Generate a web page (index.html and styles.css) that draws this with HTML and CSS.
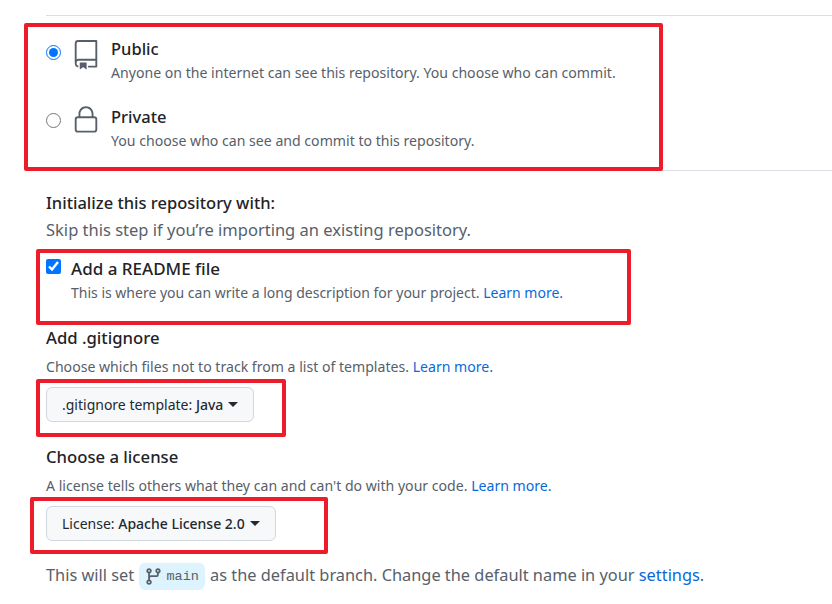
FILE: index.html
```html
<!DOCTYPE html>
<html lang="en">
<head>
    <meta charset="UTF-8">
    <title>Create a new repository</title>
    <link rel="stylesheet" href="styles.css">
</head>
<body>
    <div class="page">
        <hr class="rule">
        <div class="visibility">
            <label class="vis-row">
                <input type="radio" name="visibility" class="vis-radio" checked>
                <svg class="vis-icon" viewBox="0 0 24 24"><path d="M3 2.75A2.75 2.75 0 0 1 5.75 0h14.5a.75.75 0 0 1 .75.75v20.5a.75.75 0 0 1-.75.75h-6a.75.75 0 0 1 0-1.5h5.25v-4H6A1.5 1.5 0 0 0 4.5 18v.75c0 .716.43 1.334 1.05 1.605a.75.75 0 0 1-.6 1.374A3.251 3.251 0 0 1 3 18.75ZM19.5 1.5H5.75c-.69 0-1.25.56-1.25 1.25v12.651A2.989 2.989 0 0 1 6 15h13.5Z"/><path d="M7 18.25a.25.25 0 0 1 .25-.25h5a.25.25 0 0 1 .25.25v5.01a.25.25 0 0 1-.397.201l-2.206-1.604a.25.25 0 0 0-.294 0L7.397 23.46a.25.25 0 0 1-.397-.2Z"/></svg>
                <span class="vis-text">
                    <span class="vis-title">Public</span>
                    <span class="vis-note">Anyone on the internet can see this repository. You choose who can commit.</span>
                </span>
            </label>
            <label class="vis-row">
                <input type="radio" name="visibility" class="vis-radio">
                <svg class="vis-icon" viewBox="0 0 24 24"><path fill-rule="evenodd" d="M6 9V7.25C6 3.845 8.503 1 12 1s6 2.845 6 6.25V9h.5a2.5 2.5 0 0 1 2.5 2.5v8a2.5 2.5 0 0 1-2.5 2.5h-13A2.5 2.5 0 0 1 3 19.5v-8A2.5 2.5 0 0 1 5.5 9ZM5.5 10.5a1 1 0 0 0-1 1v8a1 1 0 0 0 1 1h13a1 1 0 0 0 1-1v-8a1 1 0 0 0-1-1ZM7.5 7.25V9h9V7.25c0-2.67-1.922-4.75-4.5-4.75-2.578 0-4.5 2.08-4.5 4.75Z"/></svg>
                <span class="vis-text">
                    <span class="vis-title">Private</span>
                    <span class="vis-note">You choose who can see and commit to this repository.</span>
                </span>
            </label>
        </div>
        <hr class="rule">

        <h3 class="init-title">Initialize this repository with:</h3>
        <p class="init-note">Skip this step if you’re importing an existing repository.</p>

        <label class="readme">
            <input type="checkbox" class="readme-check" checked>
            <span class="readme-title">Add a README file</span>
        </label>
        <p class="readme-note">This is where you can write a long description for your project. <a href="#">Learn more.</a></p>

        <h4 class="opt-title opt-gitignore">Add .gitignore</h4>
        <p class="opt-note">Choose which files not to track from a list of templates. <a href="#">Learn more.</a></p>
        <button class="select-btn btn-gitignore">.gitignore template: <b>Java</b><span class="caret"></span></button>

        <h4 class="opt-title opt-license">Choose a license</h4>
        <p class="opt-note">A license tells others what they can and can't do with your code. <a href="#">Learn more.</a></p>
        <button class="select-btn btn-license">License: <b>Apache License 2.0</b><span class="caret"></span></button>

        <p class="branch-line">This will set <span class="branch-badge"><svg class="branch-icon" viewBox="0 0 16 16"><path d="M9.5 3.25a2.25 2.25 0 1 1 3 2.122V6A2.5 2.5 0 0 1 10 8.5H6a1 1 0 0 0-1 1v1.128a2.251 2.251 0 1 1-1.5 0V5.372a2.25 2.25 0 1 1 1.5 0v1.836A2.493 2.493 0 0 1 6 7h4a1 1 0 0 0 1-1v-.628A2.25 2.25 0 0 1 9.5 3.25Zm-6 0a.75.75 0 1 0 1.5 0 .75.75 0 0 0-1.5 0Zm8.25-.75a.75.75 0 1 0 0 1.5.75.75 0 0 0 0-1.5ZM4.25 12a.75.75 0 1 0 0 1.5.75.75 0 0 0 0-1.5Z"/></svg><code>main</code></span> as the default branch. Change the default name in your <a href="#">settings</a>.</p>
    </div>

    <!-- red annotation boxes drawn over the screenshot -->
    <div class="mark mark-visibility"></div>
    <div class="mark mark-readme"></div>
    <div class="mark mark-gitignore"></div>
    <div class="mark mark-license"></div>
</body>
</html>
```

FILE: styles.css
```css
html, body {
    height: 100%;
}
body {
    margin: 0;
    background: #fff;
    color: #1f2328;
    font-family: "Noto Sans", "Open Sans", sans-serif;
    overflow: hidden;
    position: relative;
}
a {
    color: #0969da;
    text-decoration: none;
}
.page {
    padding: 15px 0 0 46px;
}
.rule {
    margin: 0;
    border: none;
    border-top: 1px solid #d8dee4;
}

/* public / private */
.visibility {
    padding-top: 21px;
    box-sizing: border-box;
    height: 154px;
}
.vis-row {
    display: flex;
    align-items: flex-start;
    height: 68px;
}
.vis-radio {
    width: 15px;
    height: 15px;
    margin: 8px 10px 0 0;
}
.vis-icon {
    width: 30px;
    height: 30px;
    margin: 3px 10px 0 0;
    fill: #57606a;
    flex: none;
}
.vis-row:last-child .vis-icon {
    margin-top: 0;
}
.vis-text {
    display: flex;
    flex-direction: column;
}
.vis-title {
    font-size: 16.5px;
    font-weight: 500;
    line-height: 24px;
}
.vis-note {
    font-size: 14.1px;
    line-height: 24px;
    color: #57606a;
}

/* initialize */
.init-title {
    margin: 20px 0 0;
    font-size: 16.5px;
    font-weight: 500;
    line-height: 24px;
}
.init-note {
    margin: 2px 0 0;
    font-size: 16.5px;
    line-height: 26px;
    color: #57606a;
}
.readme {
    display: flex;
    align-items: center;
    margin-top: 12px;
    height: 26px;
}
.readme-check {
    width: 15px;
    height: 15px;
    margin: -3px 10px 0 0;
}
.readme-title {
    font-size: 17px;
    font-weight: 500;
}
.readme-note {
    margin: 0 0 0 25px;
    font-size: 14px;
    line-height: 24px;
    color: #57606a;
}

/* gitignore and license */
.opt-title {
    margin: 0;
    font-size: 16.7px;
    font-weight: 500;
    line-height: 24px;
}
.opt-gitignore {
    margin-top: 21px;
}
.opt-license {
    margin-top: 23px;
}
.opt-note {
    margin: 5px 0 0;
    font-size: 14.1px;
    line-height: 24px;
    color: #57606a;
}
.select-btn {
    display: flex;
    align-items: center;
    height: 35px;
    margin-top: 8px;
    padding: 0 15px;
    background: #f6f8fa;
    border: 1px solid #d0d7de;
    border-radius: 6px;
    color: #24292f;
    font-family: inherit;
    font-size: 14px;
    white-space: pre;
}
.select-btn b {
    font-weight: 500;
}
.caret {
    width: 0;
    height: 0;
    margin-left: 5px;
    border-style: solid;
    border-width: 5px 5px 0;
    border-color: #24292f transparent transparent;
}

/* default branch line */
.branch-line {
    margin: 20px 0 0;
    font-size: 16.35px;
    line-height: 28px;
    color: #57606a;
}
.branch-badge {
    display: inline-flex;
    align-items: center;
    height: 27px;
    padding: 0 6px 0 5px;
    margin: 0 1px;
    background: #ddf4ff;
    border-radius: 6px;
    vertical-align: middle;
}
.branch-icon {
    width: 19px;
    height: 19px;
    fill: #57606a;
    margin-right: 3px;
}
.branch-badge code {
    font-family: "Liberation Mono", monospace;
    font-size: 13.5px;
}

/* annotations */
.mark {
    position: absolute;
    box-sizing: border-box;
    border: 4px solid #ed1c2b;
    border-radius: 2px;
}
.mark-visibility {
    left: 24px;
    top: 23px;
    width: 639px;
    height: 148px;
}
.mark-readme {
    left: 36px;
    top: 249px;
    width: 595px;
    height: 76px;
}
.mark-gitignore {
    left: 36px;
    top: 379px;
    width: 250px;
    height: 58px;
}
.mark-license {
    left: 30px;
    top: 497px;
    width: 298px;
    height: 57px;
}
```
